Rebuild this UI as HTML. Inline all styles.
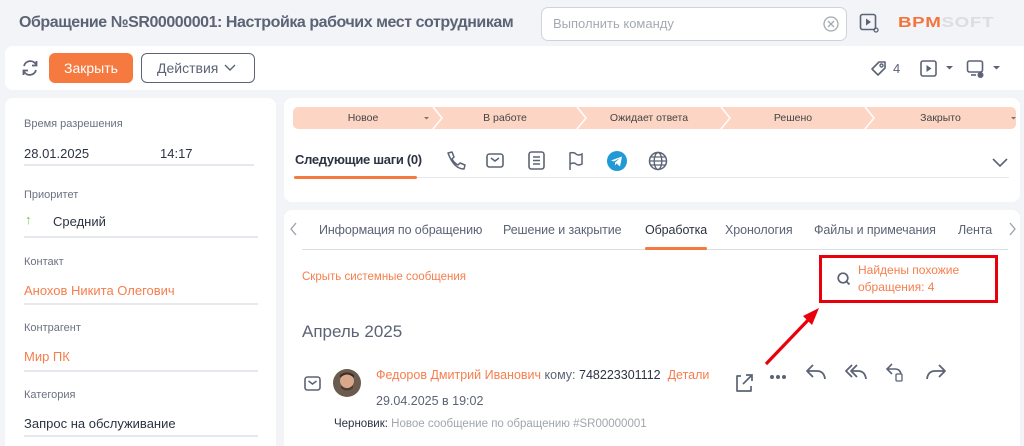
<!DOCTYPE html>
<html><head><meta charset="utf-8"><style>
*{box-sizing:border-box;margin:0;padding:0}
html,body{width:1024px;height:446px;overflow:hidden}
body{background:#f3f4f8;font-family:"Liberation Sans","Noto Sans CJK SC",sans-serif;position:relative;color:#2c3342}
.a{position:absolute;white-space:nowrap}
.panel{position:absolute;background:#fff;border-radius:8px}
.lbl{font-size:11px;color:#6a7180}
.val{font-size:13px;color:#2c3342}
.line{position:absolute;height:2px;background:#e6e8ef;left:24px;width:234px}
.org{color:#f67e4c}
.stage{position:absolute;top:107px;height:22px;background:#fdd5c4;font-size:10.5px;color:#444;line-height:22px;text-align:center}
.tab{font-size:12.5px;color:#5b6375;top:223px;letter-spacing:-0.1px}
svg{position:absolute}
</style></head><body>
<div class="a" style="left:19px;top:14px;font-size:16px;font-weight:bold;color:#5b6375;letter-spacing:-0.45px">Обращение №SR00000001: Настройка рабочих мест сотрудникам</div>
<div class="a" style="left:541px;top:7px;width:306px;height:34px;border:1px solid #cfd3db;border-radius:7px;background:#fff"></div>
<div class="a" style="left:553px;top:16px;font-size:13px;color:#a5a9b2">Выполнить команду</div>
<svg style="left:822px;top:15px" width="18" height="18"><circle cx="9" cy="9" r="7" fill="none" stroke="#a5a9b2" stroke-width="1.3"/><path d="M6 6l6 6M12 6l-6 6" stroke="#a5a9b2" stroke-width="1.3"/></svg>
<svg style="left:859px;top:12px" width="22" height="22"><rect x="1.5" y="2.5" width="15" height="15" rx="2" fill="none" stroke="#5b6375" stroke-width="1.6"/><path d="M7 6.5v7l5-3.5z" fill="#5b6375"/><circle cx="17" cy="18" r="2" fill="none" stroke="#5b6375" stroke-width="1.3"/></svg>
<div class="a" style="left:898px;top:14px;font-size:15px;font-weight:bold;letter-spacing:0.5px;transform:scaleX(1.25);transform-origin:left"><span style="color:#f4743d">BPM</span><span style="color:#dcdde2">SOFT</span></div>

<div class="panel" style="left:5px;top:46px;width:1019px;height:44px;border-radius:8px 0 0 8px"></div>
<svg style="left:20px;top:58px" width="20" height="20"><path d="M4 8a6.5 6.5 0 0 1 12-1.5M16 12a6.5 6.5 0 0 1-12 1.5" fill="none" stroke="#5b6375" stroke-width="1.8"/><path d="M16.5 3v4.5H12M3.5 17v-4.5H8" fill="none" stroke="#5b6375" stroke-width="1.8"/></svg>
<div class="a" style="left:49px;top:53px;width:84px;height:30px;background:#f67a3f;border-radius:6px;color:#fff;font-size:14px;line-height:30px;text-align:center">Закрыть</div>
<div class="a" style="left:141px;top:53px;width:114px;height:30px;border:1px solid #5b6375;border-radius:6px;color:#5b6375;font-size:14px;line-height:28px;padding-left:15px">Действия<svg style="left:82px;top:10px" width="12" height="8"><path d="M1 1l5 5 5-5" fill="none" stroke="#5b6375" stroke-width="1.4"/></svg></div>
<svg style="left:869px;top:59px" width="20" height="20"><path d="M3 10l7-7h6v6l-7 7z" fill="none" stroke="#5b6375" stroke-width="1.6" stroke-linejoin="round"/><circle cx="12.5" cy="6.5" r="1.5" fill="none" stroke="#5b6375" stroke-width="1.4"/></svg>
<div class="a" style="left:893px;top:61px;font-size:13px;color:#5b6375">4</div>
<svg style="left:919px;top:59px" width="20" height="20"><rect x="2" y="2" width="15" height="15" rx="2" fill="none" stroke="#5b6375" stroke-width="1.6"/><path d="M7.5 6v7l5-3.5z" fill="#5b6375"/></svg>
<svg style="left:945px;top:65px" width="10" height="6"><path d="M1 1h7l-3.5 3.5z" fill="#5b6375"/></svg>
<svg style="left:966px;top:59px" width="22" height="22"><rect x="1.5" y="2" width="15" height="11" rx="2" fill="none" stroke="#5b6375" stroke-width="1.6"/><path d="M5 16h5" stroke="#5b6375" stroke-width="1.6"/><circle cx="14.5" cy="16" r="3" fill="#5b6375"/></svg>
<svg style="left:992px;top:65px" width="10" height="6"><path d="M1 1h7l-3.5 3.5z" fill="#5b6375"/></svg>

<div class="panel" style="left:5px;top:98px;width:271px;height:360px"></div>
<div class="a lbl" style="left:24px;top:118px">Время разрешения</div>
<div class="a val" style="left:24px;top:146px">28.01.2025</div>
<div class="a val" style="left:160px;top:146px">14:17</div>
<div class="line" style="top:164px;width:230px"></div>
<div class="a lbl" style="left:24px;top:189px">Приоритет</div>
<div class="a" style="left:25px;top:212px;font-size:13px;color:#7bc04a">↑</div>
<div class="a val" style="left:53px;top:214px">Средний</div>
<div class="line" style="top:236px"></div>
<div class="a lbl" style="left:24px;top:256px">Контакт</div>
<div class="a val org" style="left:24px;top:283px">Анохов Никита Олегович</div>
<div class="line" style="top:303px"></div>
<div class="a lbl" style="left:24px;top:322px">Контрагент</div>
<div class="a val org" style="left:24px;top:349px">Мир ПК</div>
<div class="line" style="top:370px"></div>
<div class="a lbl" style="left:24px;top:389px">Категория</div>
<div class="a val" style="left:24px;top:416px">Запрос на обслуживание</div>
<div class="line" style="top:435px"></div>

<div class="panel" style="left:284px;top:98px;width:736px;height:104px"></div>
<div class="stage" style="left:293px;width:140px;border-radius:5px 0 0 5px">Новое</div>
<div class="stage" style="left:433px;width:144px">В работе</div>
<div class="stage" style="left:577px;width:144px">Ожидает ответа</div>
<div class="stage" style="left:721px;width:144px">Решено</div>
<div class="stage" style="left:865px;width:151px;border-radius:0 5px 5px 0">Закрыто</div>
<svg style="left:293px;top:107px" width="723" height="22"><g fill="none" stroke="#fff" stroke-width="1.5"><path d="M140 0l9 11-9 11M284 0l9 11-9 11M428 0l9 11-9 11M572 0l9 11-9 11"/></g><path d="M131 10h5l-2.5 2.5z M718 10h5l-2.5 2.5z" fill="#777"/></svg>
<div class="a" style="left:295px;top:152px;font-size:13px;font-weight:bold;color:#2c3342;letter-spacing:-0.3px">Следующие шаги (0)</div>
<div class="a" style="left:294px;top:176px;width:123px;height:3px;background:#f67a3f;border-radius:2px"></div>
<div class="a" style="left:417px;top:177px;width:592px;height:1px;background:#e6e8ef"></div>
<svg style="left:444px;top:150px" width="24" height="22"><path d="M4 3l4-1 2 5-2 2q2 4 6 6l2-2 5 2-1 4q-10 0-16-16z" fill="none" stroke="#5b6375" stroke-width="1.5" stroke-linejoin="round"/></svg>
<svg style="left:485px;top:151px" width="22" height="20"><rect x="2" y="3" width="16" height="13" rx="2.5" fill="none" stroke="#5b6375" stroke-width="1.6"/><path d="M6 7l4 3 4-3" fill="none" stroke="#5b6375" stroke-width="1.5"/></svg>
<svg style="left:527px;top:150px" width="20" height="22"><rect x="2" y="2" width="15" height="17" rx="2.5" fill="none" stroke="#5b6375" stroke-width="1.6"/><path d="M6 7h7M6 10.5h7M6 14h7" stroke="#5b6375" stroke-width="1.5"/></svg>
<svg style="left:566px;top:150px" width="20" height="22"><path d="M4 20V3q4-1 6 1t6 0v10q-4 2-6 0t-6 0" fill="none" stroke="#5b6375" stroke-width="1.5"/></svg>
<svg style="left:606px;top:150px" width="22" height="22"><circle cx="11" cy="11" r="10" fill="#1f9ad6"/><path d="M5 10.5l11-4-2 10-3.5-3-1.5 2v-3l5-4.5-6 3.5z" fill="#fff"/></svg>
<svg style="left:647px;top:150px" width="22" height="22"><circle cx="11" cy="11" r="8.5" fill="none" stroke="#5b6375" stroke-width="1.5"/><ellipse cx="11" cy="11" rx="3.8" ry="8.5" fill="none" stroke="#5b6375" stroke-width="1.4"/><path d="M2.5 11h17M4 7h14M4 15h14" stroke="#5b6375" stroke-width="1.3"/></svg>
<svg style="left:992px;top:158px" width="16" height="10"><path d="M1 1l7 7 7-7" fill="none" stroke="#5b6375" stroke-width="1.6"/></svg>

<div class="panel" style="left:284px;top:210px;width:736px;height:250px"></div>
<svg style="left:289px;top:222px" width="10" height="14"><path d="M7 1l-5 6 5 6" fill="none" stroke="#9aa0ab" stroke-width="1.3"/></svg>
<div class="a tab" style="left:319px">Информация по обращению</div>
<div class="a tab" style="left:503px">Решение и закрытие</div>
<div class="a tab" style="left:645px;color:#2c3342">Обработка</div>
<div class="a tab" style="left:725px">Хронология</div>
<div class="a tab" style="left:814px">Файлы и примечания</div>
<div class="a tab" style="left:958px">Лента</div>
<svg style="left:1008px;top:222px" width="10" height="14"><path d="M2 1l5 6-5 6" fill="none" stroke="#9aa0ab" stroke-width="1.3"/></svg>
<div class="a" style="left:302px;top:249px;width:706px;height:1px;background:#dcdee5"></div>
<div class="a" style="left:645px;top:247px;width:62px;height:3px;background:#f67a3f;border-radius:2px"></div>
<div class="a org" style="left:302px;top:271px;font-size:11.5px">Скрыть системные сообщения</div>
<div class="a" style="left:819px;top:255px;width:179px;height:48px;border:3px solid #e8000b"></div>
<svg style="left:836px;top:271px" width="16" height="16"><circle cx="7" cy="7" r="4.8" fill="none" stroke="#5b6375" stroke-width="1.7"/><path d="M10.5 10.5l3 3" stroke="#5b6375" stroke-width="1.8"/></svg>
<div class="a org" style="left:858px;top:262px;font-size:12px;line-height:17px">Найдены похожие<br>обращения: 4</div>
<svg style="left:760px;top:303px" width="70" height="66"><path d="M6 61L51 14" stroke="#e8000b" stroke-width="3.2"/><path d="M59 5L43 13l9 9z" fill="#e8000b"/></svg>
<div class="a" style="left:302px;top:322px;font-size:17px;color:#5b6375">Апрель 2025</div>
<svg style="left:303px;top:375px" width="20" height="18"><rect x="2" y="2" width="15" height="13" rx="2.5" fill="none" stroke="#5b6375" stroke-width="1.6"/><path d="M5.5 6l4 3 4-3" fill="none" stroke="#5b6375" stroke-width="1.5"/></svg>
<svg style="left:332px;top:368px" width="30" height="30"><circle cx="15" cy="15" r="14" fill="#6b5b4e"/><circle cx="15" cy="13" r="7" fill="#d9a88a"/><path d="M8 10q7-7 14 0v-3q-7-5-14 0z" fill="#3a2e26"/><path d="M9 17q6 7 12 0v3q-6 5-12 0z" fill="#4a3a30"/></svg>
<div class="a" style="left:376px;top:368px;font-size:12.5px"><span class="org">Федоров Дмитрий Иванович</span> <span style="color:#5b6375">кому:</span> <span style="color:#2c3342">748223301112</span>&nbsp; <span class="org">Детали</span></div>
<div class="a" style="left:376px;top:394px;font-size:12.5px;color:#5b6375">29.04.2025 в 19:02</div>
<div class="a" style="left:334px;top:418px;font-size:11.5px;color:#2c3342">Черновик: <span style="color:#a0a5ae">Новое сообщение по обращению #SR00000001</span></div>
<svg style="left:733px;top:371px" width="22" height="24"><path d="M8 5H4v15h14v-5" fill="none" stroke="#5b6375" stroke-width="1.7" stroke-linejoin="round"/><path d="M10 13l8-8M13 4h6v6" fill="none" stroke="#5b6375" stroke-width="1.7"/></svg>
<svg style="left:768px;top:374px" width="20" height="6"><circle cx="4" cy="3" r="2" fill="#5b6375"/><circle cx="10" cy="3" r="2" fill="#5b6375"/><circle cx="16" cy="3" r="2" fill="#5b6375"/></svg>
<svg style="left:804px;top:361px" width="24" height="22"><path d="M9 4L3 10l6 6M3 10h10q7 0 8 8" fill="none" stroke="#5b6375" stroke-width="1.8" stroke-linejoin="round"/></svg>
<svg style="left:843px;top:361px" width="26" height="22"><path d="M9 4L3 10l6 6M14 4l-6 6 6 6M8 10h7q7 0 8 8" fill="none" stroke="#5b6375" stroke-width="1.8" stroke-linejoin="round"/></svg>
<svg style="left:884px;top:361px" width="24" height="22"><path d="M8 3L3 8l5 5M3 8h8q5 0 6 5" fill="none" stroke="#5b6375" stroke-width="1.6"/><rect x="12" y="13" width="6" height="7" rx="1" fill="none" stroke="#5b6375" stroke-width="1.3"/></svg>
<svg style="left:924px;top:361px" width="24" height="22"><path d="M15 4l6 6-6 6M21 10H11q-7 0-8 8" fill="none" stroke="#5b6375" stroke-width="1.8" stroke-linejoin="round"/></svg>
</body></html>
